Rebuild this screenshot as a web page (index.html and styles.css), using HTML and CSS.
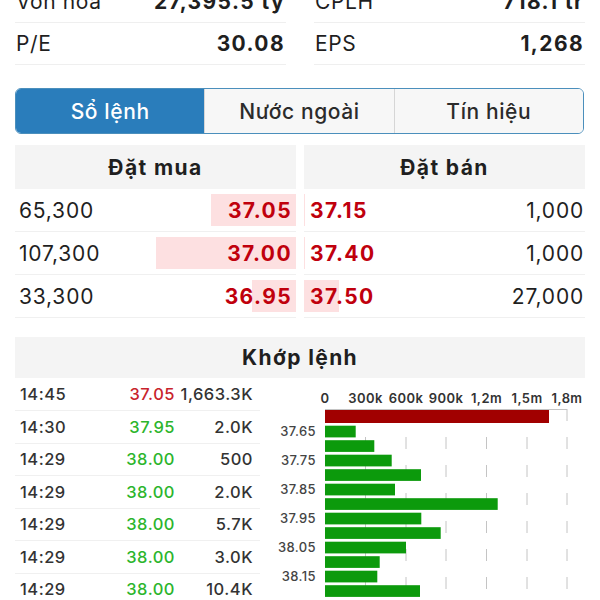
FILE: index.html
```html
<!DOCTYPE html>
<html lang="vi">
<head>
    <meta charset="UTF-8">
    <meta name="viewport" content="width=device-width, initial-scale=1.0">
    <title>Sổ lệnh</title>
    <link rel="stylesheet" href="styles.css">
</head>
<body>

<div class="page">
    <div class="stats">
        <div class="stat"><span>Vốn hóa</span><b>27,395.5 tỷ</b></div>
        <div class="stat"><span>CPLH</span><b>718.1 tr</b></div>
        <div class="stat"><span>P/E</span><b>30.08</b></div>
        <div class="stat"><span>EPS</span><b>1,268</b></div>
    </div>

    <div class="tabs">
        <div class="tab active">Sổ lệnh</div>
        <div class="tab">Nước ngoài</div>
        <div class="tab">Tín hiệu</div>
    </div>

    <div class="book">
        <div class="side buy">
            <div class="side-head">Đặt mua</div>
            <div class="book-row"><span class="depth" style="width: 30.4%"></span><span>65,300</span><b>37.05</b></div>
            <div class="book-row"><span class="depth" style="width: 50%"></span><span>107,300</span><b>37.00</b></div>
            <div class="book-row"><span class="depth" style="width: 15.5%"></span><span>33,300</span><b>36.95</b></div>
        </div>
        <div class="side sell">
            <div class="side-head">Đặt bán</div>
            <div class="book-row"><span class="depth" style="width: 0.5%"></span><b>37.15</b><span>1,000</span></div>
            <div class="book-row"><span class="depth" style="width: 0.5%"></span><b>37.40</b><span>1,000</span></div>
            <div class="book-row"><span class="depth" style="width: 12.6%"></span><b>37.50</b><span>27,000</span></div>
        </div>
    </div>

    <div class="match">
        <div class="match-head">Khớp lệnh</div>
        <div class="match-body">
            <div class="trades">
                <div class="trade"><span>14:45</span><span class="down">37.05</span><span>1,663.3K</span></div>
                <div class="trade"><span>14:30</span><span class="up">37.95</span><span>2.0K</span></div>
                <div class="trade"><span>14:29</span><span class="up">38.00</span><span>500</span></div>
                <div class="trade"><span>14:29</span><span class="up">38.00</span><span>2.0K</span></div>
                <div class="trade"><span>14:29</span><span class="up">38.00</span><span>5.7K</span></div>
                <div class="trade"><span>14:29</span><span class="up">38.00</span><span>3.0K</span></div>
                <div class="trade"><span>14:29</span><span class="up">38.00</span><span>10.4K</span></div>
            </div>

            <svg class="chart" width="340" height="222" viewBox="0 0 340 222">
                <g class="grid">
                    <line x1="65" y1="31.5" x2="307" y2="31.5" class="frame"/>
                    <line x1="105.5" y1="31" x2="105.5" y2="222"/>
                    <line x1="146" y1="31" x2="146" y2="222"/>
                    <line x1="186" y1="31" x2="186" y2="222"/>
                    <line x1="226.5" y1="31" x2="226.5" y2="222"/>
                    <line x1="267" y1="31" x2="267" y2="222"/>
                    <line x1="307" y1="31" x2="307" y2="222"/>
                </g>
                <g class="x-axis">
                    <text x="65" y="25">0</text>
                    <text x="105.5" y="25">300k</text>
                    <text x="146" y="25">600k</text>
                    <text x="186" y="25">900k</text>
                    <text x="226.5" y="25">1,2m</text>
                    <text x="267" y="25">1,5m</text>
                    <text x="307" y="25">1,8m</text>
                </g>
                <rect class="bar-red" x="65" y="32" width="224" height="13"/>
                <g class="bars">
                    <rect x="65" y="47.7" width="30.7" height="11.7"/>
                    <rect x="65" y="62.2" width="49.3" height="11.7"/>
                    <rect x="65" y="76.7" width="66.7" height="11.7"/>
                    <rect x="65" y="91.2" width="96" height="11.7"/>
                    <rect x="65" y="105.7" width="70" height="11.7"/>
                    <rect x="65" y="120.2" width="172.7" height="11.7"/>
                    <rect x="65" y="134.7" width="96.3" height="11.7"/>
                    <rect x="65" y="149.2" width="115.7" height="11.7"/>
                    <rect x="65" y="163.7" width="81" height="11.7"/>
                    <rect x="65" y="178.2" width="54.7" height="11.7"/>
                    <rect x="65" y="192.7" width="52.3" height="11.7"/>
                    <rect x="65" y="207.2" width="95" height="11.7"/>
                </g>
                <g class="y-axis">
                    <text x="56" y="57.5">37.65</text>
                    <text x="56" y="86.5">37.75</text>
                    <text x="56" y="115.5">37.85</text>
                    <text x="56" y="144.5">37.95</text>
                    <text x="56" y="173.5">38.05</text>
                    <text x="56" y="202.5">38.15</text>
                </g>
            </svg>
        </div>
    </div>
</div>

</body>
</html>
```

FILE: styles.css
```css
body {
    font-family: Inter, "Noto Sans", sans-serif;
    background-color: #ffffff;
    color: #1f1f1f;
    margin: 0;
    padding: 0;
    overflow: hidden;
}
.page {
    padding: 0 15px;
}
.stats {
    display: grid;
    grid-template-columns: 1fr 1fr;
    column-gap: 28px;
    margin-top: -19px;
}
.stat {
    display: flex;
    justify-content: space-between;
    align-items: center;
    height: 41px;
    padding: 0 1px;
    border-bottom: 1px solid #efefef;
    font-size: 21px;
    letter-spacing: 0.6px;
}
.stat b {
    font-weight: 700;
    letter-spacing: 1.4px;
}
.tabs {
    display: flex;
    margin-top: 23px;
    height: 44px;
    width: 567px;
    border: 1px solid #4b8fbc;
    border-radius: 6px;
    overflow: hidden;
}
.tab {
    flex: 1;
    display: flex;
    align-items: center;
    justify-content: center;
    background: #f7f7f7;
    color: #2b2b2b;
    font-size: 21px;
    font-weight: 500;
    letter-spacing: 0.6px;
    border-left: 1px solid #d6d6d6;
}
.tab:first-child {
    border-left: none;
}
.tab.active {
    background: #2a7dbb;
    color: #ffffff;
}
.book {
    display: flex;
    gap: 8px;
    margin-top: 11px;
}
.side {
    flex: 1;
}
.side-head {
    height: 44px;
    display: flex;
    align-items: center;
    justify-content: center;
    background: #f4f4f4;
    font-size: 21px;
    font-weight: 700;
    letter-spacing: 1.4px;
}
.book-row {
    position: relative;
    display: flex;
    justify-content: space-between;
    align-items: center;
    height: 42px;
    border-bottom: 1px solid #f0f0f0;
    font-size: 21px;
    letter-spacing: 0.8px;
}
.book-row span, .book-row b {
    position: relative;
}
.book-row b {
    color: #c0000d;
    font-weight: 700;
    letter-spacing: 1.4px;
}
.depth {
    position: absolute !important;
    top: 5px;
    bottom: 5px;
    background: #fde0e1;
}
.buy .book-row {
    padding: 0 4px 0 4px;
}
.buy .depth {
    right: 0;
}
.sell .book-row {
    padding: 0 1px 0 6px;
}
.sell .depth {
    left: 0;
}
.match {
    margin-top: 19px;
}
.match-head {
    height: 41px;
    display: flex;
    align-items: center;
    justify-content: center;
    background: #f4f4f4;
    font-size: 21px;
    font-weight: 700;
    letter-spacing: 1.4px;
}
.match-body {
    display: flex;
    margin-right: -15px;
}
.trades {
    width: 245px;
}
.trade {
    display: grid;
    grid-template-columns: 80px 75px 78px;
    align-items: center;
    height: 31.5px;
    padding: 0 7px 0 5px;
    border-bottom: 1px solid #f0f0f0;
    font-size: 16.5px;
    font-weight: 500;
    letter-spacing: 0.5px;
    color: #333333;
}
.trade:first-child {
    height: 32px;
}
.trade span:nth-child(2), .trade span:nth-child(3) {
    text-align: right;
}
.trade .down {
    color: #c8232c;
}
.trade .up {
    color: #2cb52c;
}
.chart {
    display: block;
}
.grid line {
    stroke: #c4c4c4;
    stroke-width: 1;
    stroke-dasharray: 12 16;
}
.grid .frame {
    stroke-dasharray: none;
}
.x-axis text {
    font-family: Inter, sans-serif;
    font-size: 13px;
    font-weight: 600;
    letter-spacing: 0.4px;
    fill: #333333;
    text-anchor: middle;
}
.y-axis text {
    font-family: Inter, sans-serif;
    font-size: 13px;
    font-weight: 500;
    letter-spacing: 0.4px;
    fill: #444444;
    text-anchor: end;
}
.bar-red {
    fill: #a10000;
}
.bars rect {
    fill: #0c9a0c;
}
```
